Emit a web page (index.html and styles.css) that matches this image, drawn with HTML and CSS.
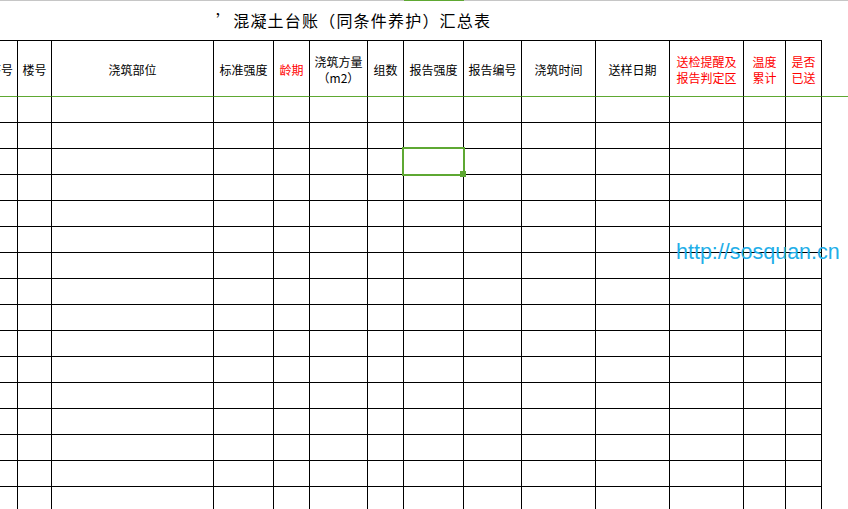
FILE: index.html
```html
<!DOCTYPE html>
<html lang="zh-CN">
<head>
<meta charset="utf-8">
<title>混凝土台账（同条件养护）汇总表</title>
<link rel="stylesheet" href="styles.css">
</head>
<body>
<div class="sheet">
  <div class="colbar">
    <span></span><span></span><span></span><span></span><span></span><span></span><span></span><span class="on"></span><span></span><span></span><span></span><span></span><span></span><span></span><span></span>
  </div>
  <h1 class="title">’混凝土台账（同条件养护）汇总表</h1>
  <div class="grid">
    <div class="row head">
      <div class="c c0"><span>序号</span></div>
      <div class="c">楼号</div>
      <div class="c">浇筑部位</div>
      <div class="c">标准强度</div>
      <div class="c r">龄期</div>
      <div class="c">浇筑方量<br>（m2）</div>
      <div class="c">组数</div>
      <div class="c">报告强度</div>
      <div class="c">报告编号</div>
      <div class="c">浇筑时间</div>
      <div class="c">送样日期</div>
      <div class="c r">送检提醒及<br>报告判定区</div>
      <div class="c r">温度<br>累计</div>
      <div class="c r">是否<br>已送</div>
      <div class="f"></div>
    </div>
    <div class="row"><div class="c"></div><div class="c"></div><div class="c"></div><div class="c"></div><div class="c"></div><div class="c"></div><div class="c"></div><div class="c"></div><div class="c"></div><div class="c"></div><div class="c"></div><div class="c"></div><div class="c"></div><div class="c"></div><div class="f"></div></div>
    <div class="row"><div class="c"></div><div class="c"></div><div class="c"></div><div class="c"></div><div class="c"></div><div class="c"></div><div class="c"></div><div class="c"></div><div class="c"></div><div class="c"></div><div class="c"></div><div class="c"></div><div class="c"></div><div class="c"></div><div class="f"></div></div>
    <div class="row"><div class="c"></div><div class="c"></div><div class="c"></div><div class="c"></div><div class="c"></div><div class="c"></div><div class="c"></div><div class="c sel"><div class="selbox"></div></div><div class="c"></div><div class="c"></div><div class="c"></div><div class="c"></div><div class="c"></div><div class="c"></div><div class="f"></div></div>
    <div class="row"><div class="c"></div><div class="c"></div><div class="c"></div><div class="c"></div><div class="c"></div><div class="c"></div><div class="c"></div><div class="c"></div><div class="c"></div><div class="c"></div><div class="c"></div><div class="c"></div><div class="c"></div><div class="c"></div><div class="f"></div></div>
    <div class="row"><div class="c"></div><div class="c"></div><div class="c"></div><div class="c"></div><div class="c"></div><div class="c"></div><div class="c"></div><div class="c"></div><div class="c"></div><div class="c"></div><div class="c"></div><div class="c"></div><div class="c"></div><div class="c"></div><div class="f"></div></div>
    <div class="row"><div class="c"></div><div class="c"></div><div class="c"></div><div class="c"></div><div class="c"></div><div class="c"></div><div class="c"></div><div class="c"></div><div class="c"></div><div class="c"></div><div class="c"></div><div class="c"></div><div class="c"></div><div class="c"></div><div class="f"></div></div>
    <div class="row"><div class="c"></div><div class="c"></div><div class="c"></div><div class="c"></div><div class="c"></div><div class="c"></div><div class="c"></div><div class="c"></div><div class="c"></div><div class="c"></div><div class="c"></div><div class="c"></div><div class="c"></div><div class="c"></div><div class="f"></div></div>
    <div class="row"><div class="c"></div><div class="c"></div><div class="c"></div><div class="c"></div><div class="c"></div><div class="c"></div><div class="c"></div><div class="c"></div><div class="c"></div><div class="c"></div><div class="c"></div><div class="c"></div><div class="c"></div><div class="c"></div><div class="f"></div></div>
    <div class="row"><div class="c"></div><div class="c"></div><div class="c"></div><div class="c"></div><div class="c"></div><div class="c"></div><div class="c"></div><div class="c"></div><div class="c"></div><div class="c"></div><div class="c"></div><div class="c"></div><div class="c"></div><div class="c"></div><div class="f"></div></div>
    <div class="row"><div class="c"></div><div class="c"></div><div class="c"></div><div class="c"></div><div class="c"></div><div class="c"></div><div class="c"></div><div class="c"></div><div class="c"></div><div class="c"></div><div class="c"></div><div class="c"></div><div class="c"></div><div class="c"></div><div class="f"></div></div>
    <div class="row"><div class="c"></div><div class="c"></div><div class="c"></div><div class="c"></div><div class="c"></div><div class="c"></div><div class="c"></div><div class="c"></div><div class="c"></div><div class="c"></div><div class="c"></div><div class="c"></div><div class="c"></div><div class="c"></div><div class="f"></div></div>
    <div class="row"><div class="c"></div><div class="c"></div><div class="c"></div><div class="c"></div><div class="c"></div><div class="c"></div><div class="c"></div><div class="c"></div><div class="c"></div><div class="c"></div><div class="c"></div><div class="c"></div><div class="c"></div><div class="c"></div><div class="f"></div></div>
    <div class="row"><div class="c"></div><div class="c"></div><div class="c"></div><div class="c"></div><div class="c"></div><div class="c"></div><div class="c"></div><div class="c"></div><div class="c"></div><div class="c"></div><div class="c"></div><div class="c"></div><div class="c"></div><div class="c"></div><div class="f"></div></div>
    <div class="row"><div class="c"></div><div class="c"></div><div class="c"></div><div class="c"></div><div class="c"></div><div class="c"></div><div class="c"></div><div class="c"></div><div class="c"></div><div class="c"></div><div class="c"></div><div class="c"></div><div class="c"></div><div class="c"></div><div class="f"></div></div>
    <div class="row"><div class="c"></div><div class="c"></div><div class="c"></div><div class="c"></div><div class="c"></div><div class="c"></div><div class="c"></div><div class="c"></div><div class="c"></div><div class="c"></div><div class="c"></div><div class="c"></div><div class="c"></div><div class="c"></div><div class="f"></div></div>
    <div class="row"><div class="c"></div><div class="c"></div><div class="c"></div><div class="c"></div><div class="c"></div><div class="c"></div><div class="c"></div><div class="c"></div><div class="c"></div><div class="c"></div><div class="c"></div><div class="c"></div><div class="c"></div><div class="c"></div><div class="f"></div></div>
  </div>
  <div class="watermark">http://sosquan.cn</div>
</div>
</body>
</html>
```
FILE: styles.css
```css
html, body {
  margin: 0;
  padding: 0;
  background: #ffffff;
  overflow: hidden;
}

.sheet {
  position: relative;
  width: 848px;
  height: 509px;
  overflow: hidden;
  font-family: "Noto Sans CJK SC", "Noto Sans", sans-serif;
  color: #000;
}

.colbar,
.row {
  display: grid;
  grid-template-columns: 18px 34px 162px 60px 36px 58px 36px 60px 58px 74px 74px 74px 42px 36px 1fr;
}

.colbar {
  height: 1px;
  background: #c6c6c6;
}

.colbar .on {
  background: #5ea832;
}

.title {
  margin: 0;
  height: 39px;
  line-height: 39px;
  padding-left: 216px;
  font-size: 16px;
  font-weight: normal;
  letter-spacing: 1.2px;
  white-space: nowrap;
}

.row {
  height: 26px;
}

.c {
  box-sizing: border-box;
  border-right: 1px solid #000;
  border-bottom: 1px solid #000;
  display: flex;
  align-items: center;
  justify-content: center;
  text-align: center;
  font-size: 12px;
  line-height: 16px;
  white-space: nowrap;
}

.head {
  height: 57px;
}

.head .c {
  border-top: 1px solid #000;
  border-bottom: 1px solid #5ea832;
  padding-top: 2px;
}

.head .f {
  margin-top: 1px;
  border-bottom: 1px solid #5ea832;
}

.c0 {
  overflow: hidden;
  justify-content: flex-end;
  padding-right: 4px;
}

.c0 span {
  flex: none;
}

.r {
  color: #ff0000;
}

.sel {
  position: relative;
}

.selbox {
  position: absolute;
  left: -2px;
  top: -2px;
  right: -2px;
  bottom: -2px;
  border: 2px solid #5ea832;
}

.selbox::after {
  content: "";
  position: absolute;
  right: -3px;
  bottom: -3px;
  width: 6px;
  height: 6px;
  background: #5ea832;
}

.watermark {
  position: absolute;
  left: 676px;
  top: 242px;
  font-family: "Liberation Sans", Arial, sans-serif;
  font-size: 21.5px;
  line-height: 1;
  color: #22aee8;
  white-space: nowrap;
}
```
